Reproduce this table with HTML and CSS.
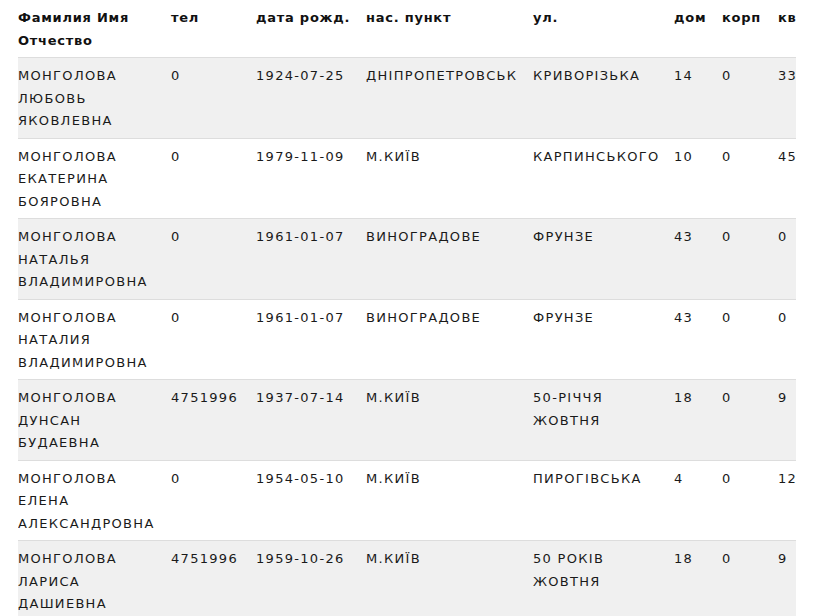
FILE: index.html
```html
<!DOCTYPE html>
<html lang="ru">
<head>
<meta charset="utf-8">
<title>Список</title>
<link rel="stylesheet" href="styles.css">
</head>
<body>
<div class="wrap">
<table class="people">
<colgroup>
<col class="c-name"><col class="c-tel"><col class="c-date"><col class="c-city"><col class="c-street"><col class="c-house"><col class="c-korp"><col class="c-kv">
</colgroup>
<thead>
<tr><th class="wrapcell">Фамилия Имя Отчество</th><th>тел</th><th>дата рожд.</th><th>нас. пункт</th><th>ул.</th><th>дом</th><th>корп</th><th>кв</th></tr>
</thead>
<tbody>
<tr><td>МОНГОЛОВА ЛЮБОВЬ ЯКОВЛЕВНА</td><td>0</td><td>1924-07-25</td><td>ДНІПРОПЕТРОВСЬК</td><td>КРИВОРІЗЬКА</td><td>14</td><td>0</td><td>33</td></tr>
<tr><td>МОНГОЛОВА ЕКАТЕРИНА БОЯРОВНА</td><td>0</td><td>1979-11-09</td><td>М.КИЇВ</td><td>КАРПИНСЬКОГО</td><td>10</td><td>0</td><td>45</td></tr>
<tr><td>МОНГОЛОВА НАТАЛЬЯ ВЛАДИМИРОВНА</td><td>0</td><td>1961-01-07</td><td>ВИНОГРАДОВЕ</td><td>ФРУНЗЕ</td><td>43</td><td>0</td><td>0</td></tr>
<tr><td>МОНГОЛОВА НАТАЛИЯ ВЛАДИМИРОВНА</td><td>0</td><td>1961-01-07</td><td>ВИНОГРАДОВЕ</td><td>ФРУНЗЕ</td><td>43</td><td>0</td><td>0</td></tr>
<tr><td>МОНГОЛОВА ДУНСАН БУДАЕВНА</td><td>4751996</td><td>1937-07-14</td><td>М.КИЇВ</td><td>50-РІЧЧЯ ЖОВТНЯ</td><td>18</td><td>0</td><td>9</td></tr>
<tr><td>МОНГОЛОВА ЕЛЕНА АЛЕКСАНДРОВНА</td><td>0</td><td>1954-05-10</td><td>М.КИЇВ</td><td>ПИРОГІВСЬКА</td><td>4</td><td>0</td><td>12</td></tr>
<tr><td>МОНГОЛОВА ЛАРИСА ДАШИЕВНА</td><td>4751996</td><td>1959-10-26</td><td>М.КИЇВ</td><td>50 РОКІВ ЖОВТНЯ</td><td>18</td><td>0</td><td>9</td></tr>
</tbody>
</table>
</div>
</body>
</html>
```
FILE: styles.css
```css
html, body {
  margin: 0;
  padding: 0;
  background: #ffffff;
}
body {
  font-family: "DejaVu Sans", Verdana, sans-serif;
  font-size: 13px;
  color: #1a1a1a;
}
.wrap {
  margin: 0 17px 0 18px;
  overflow: hidden;
}
.people {
  border-collapse: collapse;
  border-spacing: 0;
  table-layout: fixed;
  width: 800px;
}
.c-name { width: 153px; }
.c-tel { width: 85px; }
.c-date { width: 110px; }
.c-city { width: 167px; }
.c-street { width: 141px; }
.c-house { width: 48px; }
.c-korp { width: 56px; }
.c-kv { width: 40px; }
.people th,
.people td {
  text-align: left;
  vertical-align: top;
  padding: 7px 16px 5px 0;
  line-height: 22.5px;
}
.people th {
  font-weight: bold;
  color: #111111;
  letter-spacing: 0.75px;
  white-space: nowrap;
}
.people th.wrapcell {
  white-space: normal;
}
.people td {
  font-weight: normal;
  letter-spacing: 1.3px;
  border-top: 1px solid #dddddd;
}
.people tbody tr:nth-child(odd) td {
  background: #f0f0f0;
}
```
